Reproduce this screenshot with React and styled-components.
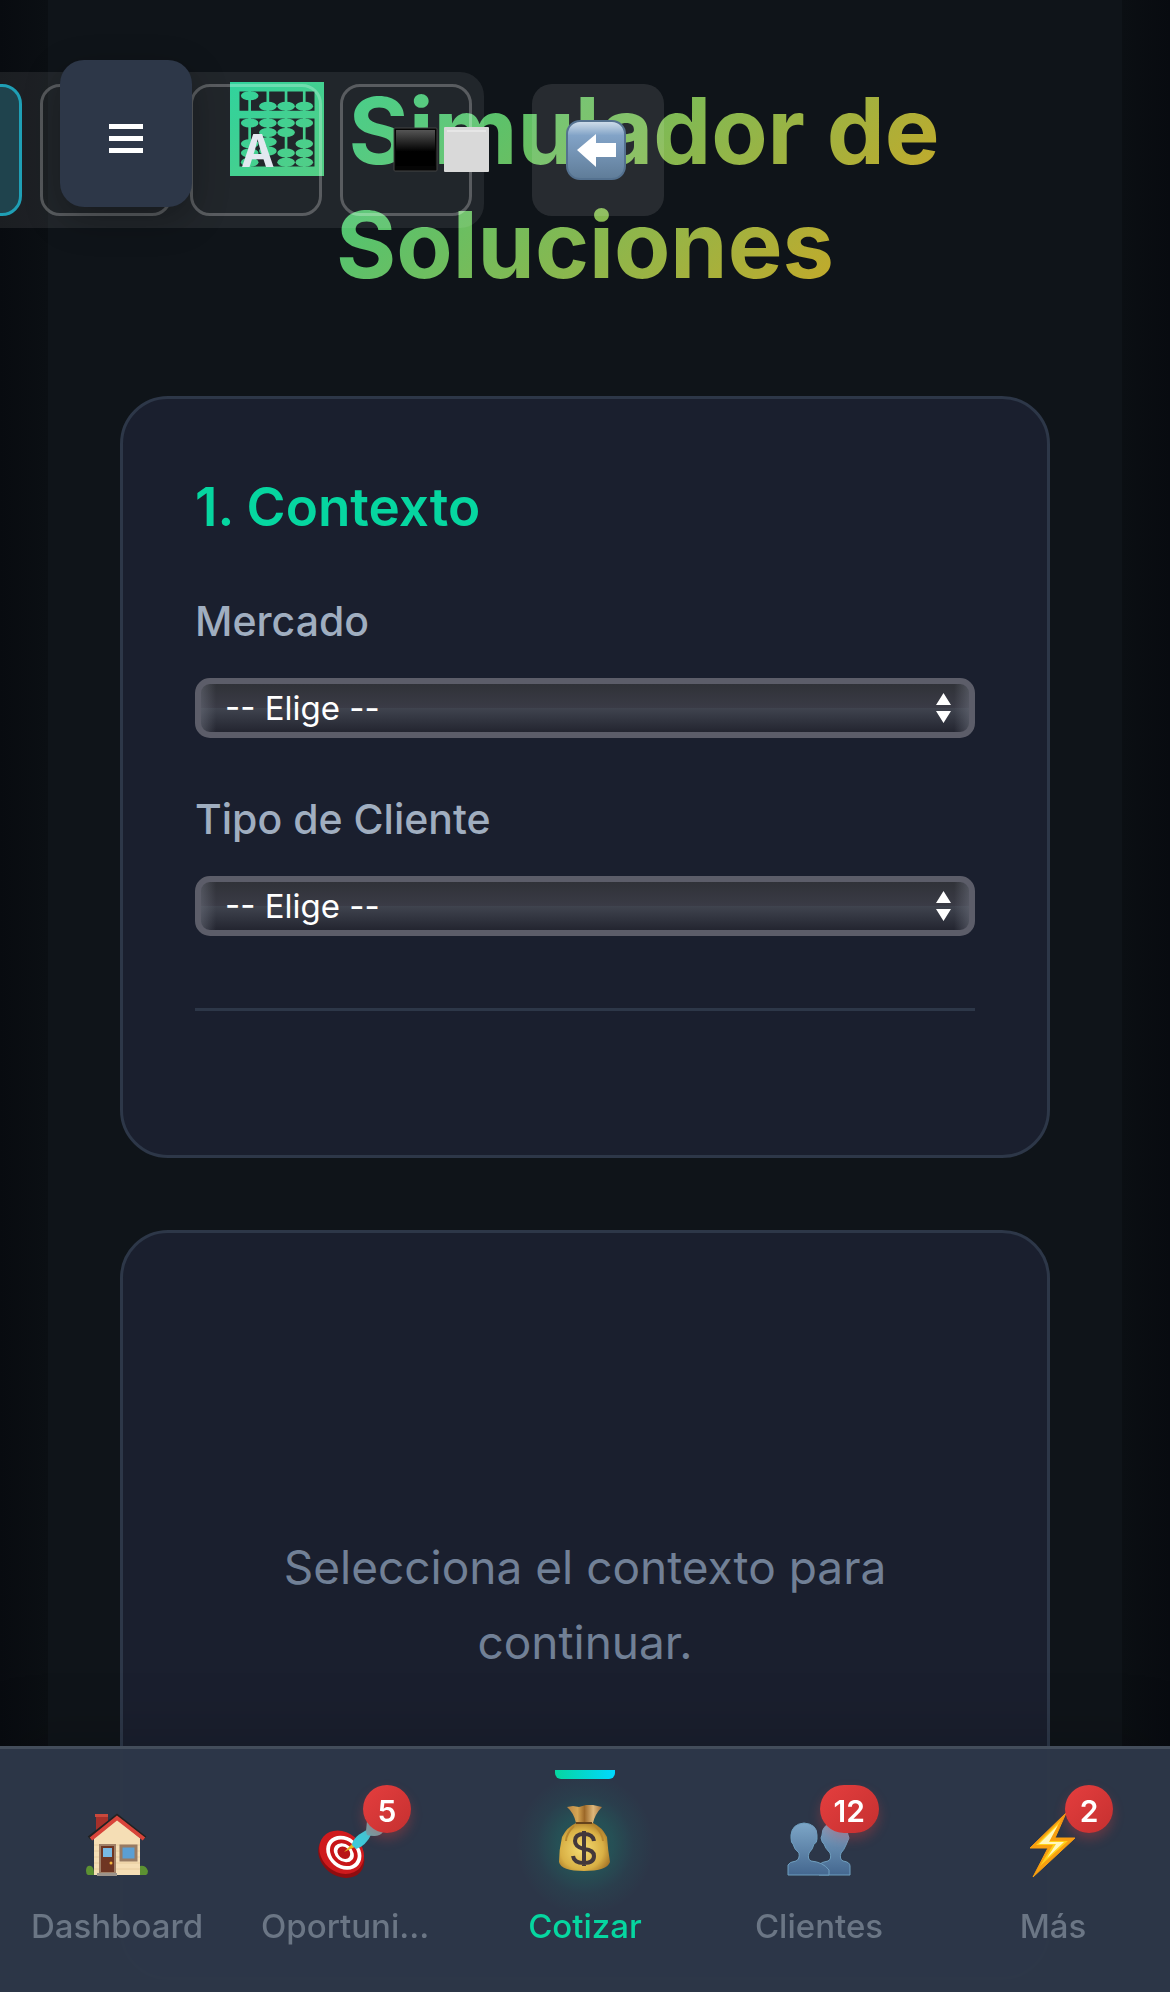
import React from 'react';
import styled, { createGlobalStyle, css } from 'styled-components';

const Global = createGlobalStyle`
  * { box-sizing: border-box; }
  html, body { margin: 0; background: #0f1419; }
  body {
    font-family: Inter, "Liberation Sans", sans-serif;
    overflow: hidden;
    -webkit-font-smoothing: antialiased;
  }
  button, select { font-family: inherit; }
`;

const Page = styled.div`
  height: 100vh;
  overflow: hidden;
  padding: 0 48px;
  background:
    linear-gradient(90deg, #080b10, #0b0f13) left / 48px 100% no-repeat,
    linear-gradient(270deg, #080b10, #0b0f13) right / 48px 100% no-repeat,
    #0f1419;
`;

const Content = styled.main`
  display: flex;
  flex-direction: column;
  gap: 72px;
  padding: 74px 72px 0;
`;

const Title = styled.h1`
  margin: 0 0 7px;
  padding-bottom: 15px;
  font-size: 92px;
  line-height: 114px;
  font-weight: 700;
  text-align: center;
  color: transparent;
  background: linear-gradient(135deg, #06d6a0, #f59e0b);
  background-clip: text;
  -webkit-background-clip: text;
`;

const TitleIcon = styled.svg`
  width: 94px;
  height: 94px;
  margin-right: 24px;
  vertical-align: -12px;
`;

const Card = styled.section`
  display: flex;
  flex-direction: column;
  padding: 72px;
  border: 3px solid #2d3748;
  border-radius: 48px;
  background: #1a1f2e;
`;

const EmptyCard = styled(Card)`
  min-height: 750px;
  align-items: center;
  justify-content: center;
`;

const Empty = styled.p`
  margin: 0;
  max-width: 640px;
  font-size: 46px;
  line-height: 75px;
  text-align: center;
  color: #718096;
`;

const CardTitle = styled.h2`
  margin: 0 0 45px;
  font-size: 53px;
  line-height: 72px;
  font-weight: 600;
  color: #06d6a0;
`;

const Field = styled.div`
  display: flex;
  flex-direction: column;
  gap: 24px;
  margin-bottom: 48px;
`;

const Label = styled.label`
  font-size: 41px;
  line-height: 66px;
  font-weight: 500;
  color: #a0aec0;
`;

const SelectBox = styled.div`
  display: grid;
  align-items: center;
  height: 60px;
  & > * { grid-area: 1 / 1; }
`;

const Select = styled.select`
  appearance: none;
  width: 100%;
  height: 60px;
  padding: 0 24px;
  border: 6px solid #5c5d69;
  border-radius: 15px;
  background:
    linear-gradient(90deg, rgba(110, 114, 126, 0.5), transparent 15px, transparent calc(100% - 15px), rgba(110, 114, 126, 0.5)),
    linear-gradient(#303238, #3a3b46 50%, #40444f 50%, #232530);
  background-origin: padding-box;
  font-size: 33px;
  color: #fff;
`;

const Arrows = styled.svg`
  justify-self: end;
  width: 15px;
  height: 30px;
  margin-right: 24px;
  pointer-events: none;
`;

const Divider = styled.hr`
  width: 100%;
  margin: 24px 0 72px;
  border: 0;
  border-top: 3px solid #2d3748;
`;

const Toolbar = styled.div`
  position: fixed;
  top: 72px;
  left: -122px;
  display: flex;
  gap: 18px;
  padding: 12px;
  border-radius: 24px;
  background: rgba(255, 255, 255, 0.08);
`;

const ToolButton = styled.button`
  display: flex;
  align-items: center;
  flex: none;
  width: 132px;
  height: 132px;
  padding: 0 0 0 48px;
  border: 3px solid rgba(255, 255, 255, 0.25);
  border-radius: 20px;
  background: transparent;
  font-size: 45px;
  font-weight: 700;
  color: #e2e8f0;
  white-space: nowrap;
  ${(p) => p.$active && css`
    border-color: #1f9fb5;
    background: #1f434d;
  `}
`;

const ContrastIcon = styled.svg`
  flex: none;
  width: 98px;
  height: 46px;
`;

const BackButton = styled.button`
  position: fixed;
  top: 84px;
  left: 532px;
  display: flex;
  align-items: center;
  justify-content: center;
  width: 132px;
  height: 132px;
  padding: 0 4px 0 0;
  border: 0;
  border-radius: 20px;
  background: rgba(255, 255, 255, 0.1);
`;

const MenuButton = styled.button`
  position: fixed;
  top: 60px;
  left: 60px;
  display: flex;
  align-items: center;
  justify-content: center;
  width: 132px;
  height: 147px;
  padding: 10px 0 0;
  border: 0;
  border-radius: 24px;
  background: #2d3748;
  box-shadow: 0 12px 36px rgba(0, 0, 0, 0.3);
`;

const Nav = styled.nav`
  position: fixed;
  left: 0;
  right: 0;
  bottom: 0;
  display: grid;
  grid-template-columns: repeat(5, minmax(0, 1fr));
  height: 246px;
  padding-top: 21px;
  border-top: 3px solid #434d5b;
  background: rgba(45, 55, 72, 0.98);
  box-shadow: 0 -12px 60px rgba(0, 0, 0, 0.15);
`;

const NavItem = styled.a`
  position: relative;
  display: flex;
  flex-direction: column;
  align-items: center;
  gap: 25px;
  padding: 40px 24px 0;
  font-size: 33px;
  line-height: 45px;
  font-weight: 500;
  color: ${(p) => (p.$active ? '#06d6a0' : '#6b7685')};
  text-decoration: none;
  ${(p) => p.$active && css`
    &::before {
      content: "";
      position: absolute;
      top: 0;
      width: 60px;
      height: 9px;
      border-radius: 0 0 6px 6px;
      background: linear-gradient(90deg, #06d6a0, #00d9ff);
    }
  `}
`;

const NavText = styled.span`
  white-space: nowrap;
  ${(p) => p.$shortened && css`
    width: 180px;
    text-align: left;
  `}
`;

const IconBox = styled.span`
  position: relative;
  display: flex;
  align-items: center;
  justify-content: center;
  width: 66px;
  height: 69px;
  svg { position: relative; flex: none; overflow: visible; }
  ${(p) => p.$active && css`
    &::before {
      content: "";
      position: absolute;
      inset: -36px;
      border-radius: 50%;
      background: radial-gradient(closest-side, rgba(6, 214, 160, 0.2), rgba(6, 214, 160, 0.16) 40%, rgba(6, 214, 160, 0.05) 70%, transparent);
    }
    svg { margin-bottom: 14px; }
  `}
`;

const Badge = styled.span`
  position: absolute;
  top: -25px;
  right: -27px;
  min-width: 48px;
  height: 48px;
  padding: 0 14px;
  border-radius: 24px;
  background: linear-gradient(135deg, #e53e3e, #c53030);
  box-shadow: 0 6px 12px rgba(229, 62, 62, 0.3);
  font-size: 30px;
  line-height: 53px;
  font-weight: 600;
  text-align: center;
  color: #fff;
`;

const BEADS = [
  [0, 13.7], [1, 24.3], [2, 24.3], [3, 24.3],
  [0, 41], [1, 41], [2, 41], [3, 41],
  [1, 50.5], [2, 50.5], [1, 59.8], [1, 69],
  [0, 61.7], [0, 71], [0, 80.3],
  [2, 71], [2, 80.3],
  [3, 61.7], [3, 71], [3, 80.3],
];

function Abacus() {
  return (
    <TitleIcon viewBox="0 0 94 94" aria-hidden="true">
      <defs>
        <linearGradient id="abacus" gradientUnits="userSpaceOnUse" x1="0" y1="0" x2="94" y2="94">
          <stop offset="0" stopColor="#1fd095" />
          <stop offset="1" stopColor="#47c97a" />
        </linearGradient>
      </defs>
      <g fill="url(#abacus)">
        <path fillRule="evenodd" d="M0 0H94V94H0ZM9.500 9.500V28.700H84.500V9.500ZM9.500 36.500V84.500H84.500V36.500Z" />
        {[0, 1, 2, 3].map((i) => (
          <rect key={i} x={18.3 + i * 18.2} y="9" width="2.700" height="76" />
        ))}
        {BEADS.map(([c, y]) => (
          <ellipse key={`${c}-${y}`} cx={19.7 + c * 18.2} cy={y} rx="8.800" ry="4.500" />
        ))}
      </g>
    </TitleIcon>
  );
}

function House() {
  return (
    <svg width="62" height="62" viewBox="0 0 62 62" aria-hidden="true">
      <path d="M10 1h12v14l-12 8z" fill="#a5302a" />
      <path d="M9 0h13v3H9z" fill="#c9483c" />
      <path d="M8 24 31 5l23 19v37H8z" fill="#f5deb5" />
      <path d="M8 31h46M8 37h46M8 43h46M8 49h46M8 55h46" stroke="#e8cc9e" strokeWidth="1" />
      <path d="M3 24 31 2l28 22" fill="none" stroke="#222" strokeWidth="4" />
      <path d="M5 25 31 4l27 21" fill="none" stroke="#d8443a" strokeWidth="4" />
      <path d="M14 31h15v28H14z" fill="#6f3522" stroke="#a08068" strokeWidth="2" />
      <path d="M17 34h9v9h-9z" fill="#79b9e3" />
      <circle cx="25" cy="49" r="1.5" fill="#f2b53d" />
      <path d="M35 32h15v14H35z" fill="#5b9fd3" stroke="#987b63" strokeWidth="3" />
      <path d="M11 59h20v3H11z" fill="#9c948b" />
      <path d="M0 57q0-6 5-5 3 1 3 9H2q-2-1-2-4zM54 61v-9q6-1 8 5 0 3-2 4z" fill="#5c9132" />
    </svg>
  );
}

function Target() {
  return (
    <svg width="66" height="66" viewBox="1 1 66 66" aria-hidden="true">
      <g transform="rotate(40 24 42)">
        <ellipse cx="26" cy="44" rx="25" ry="20" fill="#8f0d10" />
        <ellipse cx="24" cy="41" rx="24" ry="20" fill="#cf1a1d" />
        <ellipse cx="26" cy="40" rx="19" ry="15.500" fill="#fff" />
        <ellipse cx="26" cy="40" rx="15" ry="12" fill="#c81518" />
        <ellipse cx="26" cy="40" rx="11" ry="8.500" fill="#fff" />
        <ellipse cx="26" cy="40" rx="7" ry="5.500" fill="#b81518" />
      </g>
      <path d="m27 41 10-10 3 4z" fill="#e4b521" />
      <path d="M35 34q1-9 17-16l3 4q-6 13-16 16z" fill="#3fc9d8" />
      <path d="m49 20 1-10q5-6 10-6l-3 12 9 5q-4 6-16 3z" fill="#6ca5ad" />
    </svg>
  );
}

function MoneyBag() {
  return (
    <svg width="52" height="68" viewBox="0 0 52 68" aria-hidden="true">
      <defs>
        <radialGradient id="bag" cx="0.45" cy="0.55" r="0.6">
          <stop offset="0" stopColor="#f5dc72" />
          <stop offset="0.7" stopColor="#d9b045" />
          <stop offset="1" stopColor="#a87728" />
        </radialGradient>
        <linearGradient id="neck" x1="0" x2="1">
          <stop offset="0" stopColor="#b78343" />
          <stop offset="0.3" stopColor="#d6a654" />
          <stop offset="0.5" stopColor="#9c6828" />
          <stop offset="0.75" stopColor="#dfb87b" />
          <stop offset="1" stopColor="#a5713a" />
        </linearGradient>
      </defs>
      <path d="M8 3 14 2 20 3 27 1 34 1 43 3q-7 7-9 16H17Q15 9 8 3z" fill="url(#neck)" />
      <path d="M17 19h17q9 4 14 14 1 14 3 25-3 9-26 9Q2 67 0 58q0-12 3-25 5-10 14-14z" fill="url(#bag)" />
      <path d="M17 19h16" stroke="#65421b" strokeWidth="2" />
      <path d="M15 22q-8 8-8 15M36 22q8 8 8 15" fill="none" stroke="#b8872e" strokeWidth="2" />
      <path d="M35 37q-1-7-10-7-9 0-9 7 0 6 9 8 10 1 10 7 0 7-10 7-10 0-11-7M25 27v35" fill="none" stroke="#43383b" strokeWidth="4" />
    </svg>
  );
}

function People() {
  return (
    <svg width="64" height="66" viewBox="0 0 64 66" aria-hidden="true">
      <defs>
        <linearGradient id="people" x1="0" y1="0" x2="0" y2="1">
          <stop offset="0" stopColor="#7da6c7" />
          <stop offset="1" stopColor="#44678f" />
        </linearGradient>
      </defs>
      <g fill="url(#people)" stroke="#6f9fc0" strokeWidth="1">
        <path d="M32 63V53q2-3 9-4 4-2 2-8-5-5-6-9-2-1-3-6 1-3 1-3 0-11 12-12 13 0 14 12l1 3-3 7q-2 5-5 8-2 6 2 8 7 1 7 5v9z" />
        <path d="M1 63V53q1-3 8-4 4-2 3-8-5-4-6-9-2-1-2-6V23q1-11 13-12 13 1 13 12v4q0 4-3 5-1 5-5 9-2 6 2 8 12 1 18 9v5z" />
      </g>
    </svg>
  );
}

function Bolt() {
  return (
    <svg width="48" height="66" viewBox="0 0 48 66" aria-hidden="true">
      <path d="M37 1 1 36h18L4 65l42-39H26z" fill="#f9a010" stroke="#f9a010" strokeLinejoin="round" />
      <path d="M32 8 7 33h17L11 54l28-25H20z" fill="#ffd21a" />
      <path d="M29 13 10 32h17l-9 14 17-16H20z" fill="#fff7bf" />
    </svg>
  );
}

const NAV = [
  { label: 'Dashboard', Icon: House },
  { label: 'Oportuni…', Icon: Target, badge: 5, shortened: true },
  { label: 'Cotizar', Icon: MoneyBag, active: true },
  { label: 'Clientes', Icon: People, badge: 12 },
  { label: 'Más', Icon: Bolt, badge: 2 },
];

function SelectField({ id, label }) {
  return (
    <Field>
      <Label htmlFor={id}>{label}</Label>
      <SelectBox>
        <Select id={id} defaultValue="">
          <option value="">-- Elige --</option>
        </Select>
        <Arrows viewBox="0 0 15 30" aria-hidden="true">
          <path d="M7.500 0 15 12H0ZM0 18h15L7.500 30Z" fill="#fff" />
        </Arrows>
      </SelectBox>
    </Field>
  );
}

export default function App() {
  return (
    <>
      <Global />
      <Page>
        <Content>
          <Title><Abacus />Simulador de Soluciones</Title>
          <Card>
            <CardTitle>1. Contexto</CardTitle>
            <SelectField id="mercado" label="Mercado" />
            <SelectField id="cliente" label="Tipo de Cliente" />
            <Divider />
          </Card>
          <EmptyCard>
            <Empty>Selecciona el contexto para continuar.</Empty>
          </EmptyCard>
        </Content>
      </Page>
      <Toolbar role="toolbar" aria-label="Accesibilidad">
        <ToolButton $active aria-label="Tema" />
        <ToolButton aria-label="Texto" />
        <ToolButton>A</ToolButton>
        <ToolButton aria-label="Contraste">
          <ContrastIcon viewBox="-2 0 98 46" aria-hidden="true">
            <defs>
              <linearGradient id="dark" x1="0" y1="0" x2="0" y2="1">
                <stop offset="0" stopColor="#555" />
                <stop offset="0.6" stopColor="#000" />
              </linearGradient>
            </defs>
            <rect x="1" y="1" width="43" height="43" rx="1" fill="#050505" stroke="#444" />
            <rect x="3" y="3" width="39" height="36" fill="url(#dark)" />
            <rect x="51" y="0" width="45" height="45" rx="1" fill="#d9d9d9" />
            <path d="M54 4h39" stroke="#e6e6e6" strokeWidth="2" />
          </ContrastIcon>
        </ToolButton>
      </Toolbar>
      <BackButton aria-label="Volver">
        <svg width="60" height="60" viewBox="0 0 60 60" aria-hidden="true">
          <defs>
            <linearGradient id="back" x1="0" y1="0" x2="0" y2="1">
              <stop offset="0" stopColor="#d3e0ec" />
              <stop offset="0.25" stopColor="#82a3c7" />
              <stop offset="1" stopColor="#5f7c98" />
            </linearGradient>
          </defs>
          <rect x="1" y="1" width="58" height="58" rx="13" fill="url(#back)" stroke="#54718f" strokeWidth="2" />
          <path d="M11 30 30 14v9h20v14H30v10z" fill="#fff" />
        </svg>
      </BackButton>
      <MenuButton aria-label="Menú">
        <svg width="34" height="29" viewBox="0 0 34 29" aria-hidden="true">
          <path d="M0 0h34v5H0zM0 12h34v5H0zM0 24h34v5H0z" fill="#fff" />
        </svg>
      </MenuButton>
      <Nav>
        {NAV.map(({ label, Icon, badge, active, shortened }) => (
          <NavItem key={label} href="#" $active={active}>
            <IconBox $active={active}>
              <Icon />
              {badge && <Badge>{badge}</Badge>}
            </IconBox>
            <NavText $shortened={shortened}>{label}</NavText>
          </NavItem>
        ))}
      </Nav>
    </>
  );
}
